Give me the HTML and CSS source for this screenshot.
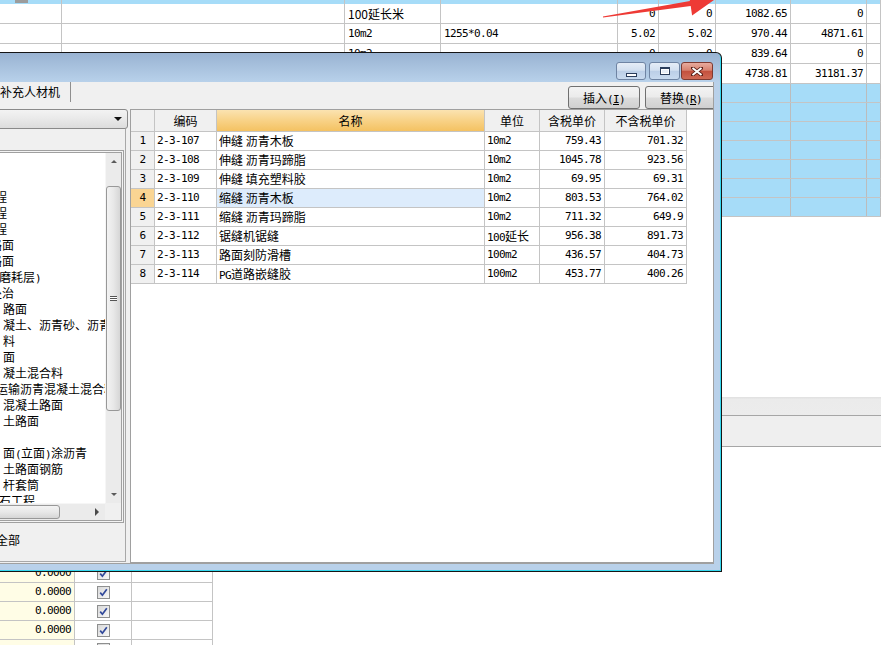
FILE: index.html
```html
<!DOCTYPE html>
<html lang="zh">
<head>
<meta charset="utf-8">
<title>补充人材机</title>
<link rel="stylesheet" href="styles.css">
</head>
<body>
<div class="sheet">
  <div class="row band">
    <div><span class="handle"></span></div><div></div><div></div><div></div><div></div><div></div><div></div><div></div><div></div>
  </div>
  <div class="row">
    <div></div><div></div><div>100延长米</div><div></div><div class="r n">0</div><div class="r n">0</div><div class="r n">1082.65</div><div class="r n">0</div><div></div>
  </div>
  <div class="row">
    <div></div><div></div><div class="n">10m2</div><div class="n">1255*0.04</div><div class="r n">5.02</div><div class="r n">5.02</div><div class="r n">970.44</div><div class="r n">4871.61</div><div></div>
  </div>
  <div class="row">
    <div></div><div></div><div class="n">10m2</div><div></div><div class="r n">0</div><div class="r n">0</div><div class="r n">839.64</div><div class="r n">0</div><div></div>
  </div>
  <div class="row">
    <div></div><div></div><div></div><div></div><div></div><div></div><div class="r n">4738.81</div><div class="r n">31181.37</div><div></div>
  </div>
  <div class="row blue"><div></div><div></div><div></div><div></div><div></div><div></div><div></div><div></div><div></div></div>
  <div class="row blue"><div></div><div></div><div></div><div></div><div></div><div></div><div></div><div></div><div></div></div>
  <div class="row blue"><div></div><div></div><div></div><div></div><div></div><div></div><div></div><div></div><div></div></div>
  <div class="row blue"><div></div><div></div><div></div><div></div><div></div><div></div><div></div><div></div><div></div></div>
  <div class="row blue"><div></div><div></div><div></div><div></div><div></div><div></div><div></div><div></div><div></div></div>
  <div class="row blue"><div></div><div></div><div></div><div></div><div></div><div></div><div></div><div></div><div></div></div>
  <div class="row blue"><div></div><div></div><div></div><div></div><div></div><div></div><div></div><div></div><div></div></div>

  <div class="bar1"></div>
  <div class="bar2"></div>

  <div class="lower">
    <div class="lrow"><div class="ly n">0.0000</div><div class="lc"><span class="cb"><svg width="11" height="11" viewBox="0 0 11 11"><path d="M2.2 5.6 L4.4 8.2 L8.8 2.2" fill="none" stroke="#30489a" stroke-width="1.7"/></svg></span></div><div></div></div>
    <div class="lrow"><div class="ly n">0.0000</div><div class="lc"><span class="cb"><svg width="11" height="11" viewBox="0 0 11 11"><path d="M2.2 5.6 L4.4 8.2 L8.8 2.2" fill="none" stroke="#30489a" stroke-width="1.7"/></svg></span></div><div></div></div>
    <div class="lrow"><div class="ly n">0.0000</div><div class="lc"><span class="cb"><svg width="11" height="11" viewBox="0 0 11 11"><path d="M2.2 5.6 L4.4 8.2 L8.8 2.2" fill="none" stroke="#30489a" stroke-width="1.7"/></svg></span></div><div></div></div>
    <div class="lrow"><div class="ly n">0.0000</div><div class="lc"><span class="cb"><svg width="11" height="11" viewBox="0 0 11 11"><path d="M2.2 5.6 L4.4 8.2 L8.8 2.2" fill="none" stroke="#30489a" stroke-width="1.7"/></svg></span></div><div></div></div>
    <div class="lrow"><div class="ly"></div><div class="lc"><span class="cb"><svg width="11" height="11" viewBox="0 0 11 11"><path d="M2.2 5.6 L4.4 8.2 L8.8 2.2" fill="none" stroke="#30489a" stroke-width="1.7"/></svg></span></div><div></div></div>
  </div>
</div>

<svg class="arrow" width="881" height="30" viewBox="0 0 881 30">
  <polygon points="602.9,16.5 689.9,1.1 688.5,-8.3 714,0 692.1,15.5 690.7,6.1 603.1,17.6" fill="#ee3a35"/>
</svg>

<div class="dialog">
  <div class="titlebar">
    <div class="tbtn tmin"><span class="imin"></span></div>
    <div class="tbtn tmax"><span class="imax"></span></div>
    <div class="tbtn tclose"><svg width="12" height="9" viewBox="0 0 12 9"><path d="M1.5 1 L10.5 8 M10.5 1 L1.5 8" stroke="#5a2018" stroke-width="3.6" stroke-linecap="square"/><path d="M1.5 1 L10.5 8 M10.5 1 L1.5 8" stroke="#ffffff" stroke-width="2"/></svg></div>
  </div>
  <div class="client">
    <div class="toolbar">
      <div class="tab">补充人材机</div>
      <div class="btns">
        <div class="btn">插入<span class="n">(<u>I</u>)</span></div>
        <div class="btn">替换<span class="n">(<u>R</u>)</span></div>
      </div>
    </div>
    <div class="body">
      <div class="leftcol">
        <div class="combo"><span class="carrow"></span></div>
        <div class="group">
          <div class="tree">
            <div class="tree-in">
              <div class="list">
                <div class="li o5">程</div>
                <div class="li o5">程</div>
                <div class="li o5">程</div>
                <div class="li o10">路面</div>
                <div class="li o10">路面</div>
                <div class="li o1">磨耗层<span class="n">)</span></div>
                <div class="li o10">处治</div>
                <div class="li">路面</div>
                <div class="li">凝土、沥青砂、沥青</div>
                <div class="li">料</div>
                <div class="li">面</div>
                <div class="li">凝土混合料</div>
                <div class="li o4">运输沥青混凝土混合料</div>
                <div class="li">混凝土路面</div>
                <div class="li">土路面</div>
                <div class="li"></div>
                <div class="li">面<span class="n">(</span>立面<span class="n">)</span>涂沥青</div>
                <div class="li">土路面钢筋</div>
                <div class="li">杆套筒</div>
                <div class="li o1">石工程</div>
              </div>
              <div class="vscroll">
                <div class="sarrow"><span class="tri-up"></span></div>
                <div class="sgap"></div>
                <div class="vthumb"><span class="grip"></span></div>
                <div class="sfill"></div>
                <div class="sarrow"><span class="tri-down"></span></div>
              </div>
              <div class="hscroll">
                <div class="hthumb"></div>
                <div class="hfill"></div>
                <div class="harrow"><span class="tri-right"></span></div>
              </div>
              <div class="corner"></div>
            </div>
          </div>
          <div class="all">全部</div>
        </div>
      </div>
      <div class="panel">
        <div class="grid">
          <div class="h rn"></div><div class="h c">编码</div><div class="h c hl">名称</div><div class="h c">单位</div><div class="h c">含税单价</div><div class="h c">不含税单价</div>

          <div class="rn n">1</div><div class="n">2-3-107</div><div>伸缝 沥青木板</div><div class="n">10m2</div><div class="r n">759.43</div><div class="r n">701.32</div>
          <div class="rn n">2</div><div class="n">2-3-108</div><div>伸缝 沥青玛蹄脂</div><div class="n">10m2</div><div class="r n">1045.78</div><div class="r n">923.56</div>
          <div class="rn n">3</div><div class="n">2-3-109</div><div>伸缝 填充塑料胶</div><div class="n">10m2</div><div class="r n">69.95</div><div class="r n">69.31</div>
          <div class="rn n cur">4</div><div class="n">2-3-110</div><div class="sel">缩缝 沥青木板</div><div class="n">10m2</div><div class="r n">803.53</div><div class="r n">764.02</div>
          <div class="rn n">5</div><div class="n">2-3-111</div><div>缩缝 沥青玛蹄脂</div><div class="n">10m2</div><div class="r n">711.32</div><div class="r n">649.9</div>
          <div class="rn n">6</div><div class="n">2-3-112</div><div>锯缝机锯缝</div><div><span class="n">100</span>延长</div><div class="r n">956.38</div><div class="r n">891.73</div>
          <div class="rn n">7</div><div class="n">2-3-113</div><div>路面刻防滑槽</div><div class="n">100m2</div><div class="r n">436.57</div><div class="r n">404.73</div>
          <div class="rn n">8</div><div class="n">2-3-114</div><div><span class="n">PG</span>道路嵌缝胶</div><div class="n">100m2</div><div class="r n">453.77</div><div class="r n">400.26</div>
        </div>
      </div>
    </div>
  </div>
</div>
</body>
</html>
```

FILE: styles.css
```css
* { box-sizing: border-box; }
html, body { margin: 0; padding: 0; }
body {
  width: 881px;
  height: 645px;
  overflow: hidden;
  position: relative;
  background: #ffffff;
  font-family: "Noto Sans CJK SC", "Liberation Sans", sans-serif;
  font-size: 12px;
  color: #000;
}
.n {
  font-family: "DejaVu Sans Mono", "Liberation Mono", monospace;
  font-size: 11px;
  letter-spacing: -0.62px;
}

/* background sheet */
.row {
  display: grid;
  grid-template-columns: 62px 283px 96px 177px 41px 57px 75px 76px 1fr;
  height: 20px;
  border-bottom: 1px solid #c4c4c4;
}
.row > div {
  border-right: 1px solid #c4c4c4;
  padding: 0 3px;
  line-height: 19px;
  white-space: nowrap;
  overflow: hidden;
}
.row > div.r, .grid > div.r { text-align: right; }
.row.band { height: 4px; border-bottom: none; background: #a6dcf8; }
.row.band > div { line-height: 4px; padding: 0; }
.handle { display: block; margin-left: 15px; width: 13px; height: 3px; background: #9c9c9c; }
.row.blue { height: 19px; background: #a6dcf8; }
.row.blue > div { border-color: #bcbcbc; }

.bar1 {
  margin-top: 180px;
  height: 19px;
  background: linear-gradient(#e2e2e2 0, #e2e2e2 1px, #ebebeb 2px, #ececec 100%);
  border-bottom: 1px solid #a6a6a6;
}
.bar2 {
  height: 31px;
  background: #efefef;
  border-bottom: 1px solid #a6a6a6;
}
.lower { margin-top: 117px; width: 213px; }
.lrow {
  display: grid;
  grid-template-columns: 75px 57px 81px;
  height: 19px;
  border-bottom: 1px solid #c4c4c4;
}
.lrow > div { border-right: 1px solid #c4c4c4; line-height: 18px; }
.ly { background: #fffde6; text-align: right; padding-right: 3px; }
.lc { display: flex; align-items: center; justify-content: center; }
.cb {
  display: flex;
  align-items: center;
  justify-content: center;
  width: 13px;
  height: 13px;
  border: 1px solid #8e8f8f;
  background: linear-gradient(135deg, #d9d9d9, #f7f7f7);
}

.arrow { position: absolute; left: 0; top: 0; pointer-events: none; }

/* dialog window */
.dialog {
  position: absolute;
  left: 0;
  top: 52px;
  width: 722px;
  height: 520px;
  border: 1px solid #151515;
  border-left: none;
  border-top-right-radius: 6px;
  padding: 0 7px 7px 0;
  background: linear-gradient(#99b3d2 0, #b8d1ea 29px, #b9d1ea 29px, #b9d1ea 100%);
  box-shadow: inset -1px -1px 0 #35d8ef;
  display: flex;
  flex-direction: column;
}
.titlebar {
  height: 29px;
  flex: none;
  display: flex;
  justify-content: flex-end;
  align-items: flex-start;
  padding: 9px 1px 0 0;
}
.tbtn {
  height: 18px;
  border: 1px solid #6f84a3;
  border-radius: 3px;
  display: flex;
  justify-content: center;
  align-items: center;
  position: relative;
}
.tmin { width: 30px; margin-right: 3px; background: linear-gradient(#e5edf7 0%, #d3e0f0 45%, #bccfe7 52%, #c8daef 100%); }
.tmax { width: 31px; margin-right: 1px; background: linear-gradient(#e5edf7 0%, #d3e0f0 45%, #bccfe7 52%, #c8daef 100%); }
.tclose { width: 32px; border-color: #7e3a31; background: linear-gradient(#e8ab9e 0%, #d78270 45%, #c4513e 52%, #cf6a55 100%); }
.imin {
  width: 11px;
  height: 4px;
  margin-top: 8px;
  border: 1px solid #2b3d5b;
  background: #fff;
}
.imax {
  width: 10px;
  height: 8px;
  margin-bottom: 1px;
  border: 1px solid #2b3d5b;
  border-top-width: 2px;
  background: #e8eef7;
  box-shadow: inset 0 0 0 1px #ffffff;
}

.client {
  flex: 1;
  background: #f0f0f0;
  border-right: 1px solid #a0a0a0;
  border-bottom: 1px solid #a0a0a0;
  overflow: hidden;
  display: flex;
  flex-direction: column;
}
.toolbar { height: 27px; flex: none; display: flex; align-items: flex-start; }
.tab {
  width: 71px;
  height: 20px;
  line-height: 20px;
  border-right: 1px solid #8f8f8f;
  white-space: nowrap;
}
.btns { margin-left: auto; margin-right: -4px; margin-top: 4px; display: flex; gap: 5px; }
.btn {
  width: 72px;
  height: 23px;
  border: 1px solid #707070;
  border-radius: 3px;
  background: linear-gradient(#f3f3f3 0%, #ebebeb 48%, #dcdcdc 52%, #d0d0d0 100%);
  text-align: center;
  line-height: 21px;
  white-space: nowrap;
}

.body { flex: 1; display: flex; }
.leftcol { width: 126px; flex: none; display: flex; flex-direction: column; }
.combo {
  height: 20px;
  width: 133px;
  margin-left: -5px;
  flex: none;
  border: 1px solid #8a8a8a;
  border-radius: 3px;
  background: linear-gradient(#f3f3f3 0%, #e9e9e9 50%, #dcdcdc 100%);
  display: flex;
  justify-content: flex-end;
  align-items: center;
  padding-right: 5px;
}
.carrow {
  width: 0;
  height: 0;
  border-left: 4px solid transparent;
  border-right: 4px solid transparent;
  border-top: 4px solid #111;
}
.group {
  height: 433px;
  border-right: 1px solid #a8a8a8;
  border-bottom: 1px solid #a8a8a8;
  padding-top: 21px;
}
.tree {
  margin-left: -3px;
  width: 127px;
  height: 373px;
  border: 1px solid #a0a0a0;
  padding: 1px;
  background: #f4f4f4;
}
.tree-in {
  height: 100%;
  border: 1px solid #a0a0a0;
  background: #fff;
  display: grid;
  grid-template-columns: 105px 16px;
  grid-template-rows: 350px 17px;
}
.list { overflow: hidden; padding-top: 36px; }
.li { height: 16px; line-height: 16px; white-space: nowrap; padding-left: 3px; }
.li.o5 { padding-left: 0; text-indent: -5px; }
.li.o10 { padding-left: 0; text-indent: -10px; }
.li.o1 { padding-left: 0; text-indent: -1px; }
.li.o4 { padding-left: 0; text-indent: -4px; }

.vscroll {
  background: #ebebeb;
  border-left: 1px solid #f6f6f6;
  display: flex;
  flex-direction: column;
  align-items: center;
}
.sarrow { height: 17px; width: 100%; display: flex; justify-content: center; align-items: center; }
.tri-up { width: 0; height: 0; border-left: 3px solid transparent; border-right: 3px solid transparent; border-bottom: 3px solid #5a5a5a; }
.tri-down { width: 0; height: 0; border-left: 3px solid transparent; border-right: 3px solid transparent; border-top: 3px solid #5a5a5a; }
.tri-right { width: 0; height: 0; border-top: 4px solid transparent; border-bottom: 4px solid transparent; border-left: 4px solid #4a4a4a; }
.sgap { height: 16px; }
.vthumb {
  height: 225px;
  width: 15px;
  border: 1px solid #989898;
  border-radius: 3px;
  background: linear-gradient(90deg, #f3f3f3 0%, #e8e8e8 50%, #d6d6d6 100%);
  display: flex;
  justify-content: center;
  align-items: center;
}
.grip {
  width: 7px;
  height: 5px;
  border-top: 1px solid #555;
  border-bottom: 1px solid #555;
  background: linear-gradient(#fff 0, #fff 1px, #555 1px, #555 2px, #fff 2px);
}
.sfill { flex: 1; }
.hscroll {
  background: #ebebeb;
  border-top: 1px solid #f6f6f6;
  display: flex;
  align-items: center;
}
.hthumb {
  width: 63px;
  height: 14px;
  margin-left: -3px;
  border: 1px solid #989898;
  border-radius: 3px;
  background: linear-gradient(#f3f3f3 0%, #e8e8e8 50%, #d6d6d6 100%);
}
.hfill { flex: 1; }
.harrow { width: 17px; display: flex; justify-content: center; }
.corner { background: #f0f0f0; }
.all { padding-top: 9px; line-height: 16px; text-indent: -4px; white-space: nowrap; }

.panel {
  width: 583px;
  margin-left: 4px;
  border: 1px solid #a0a0a0;
  border-right: none;
  background: #fff;
}
.grid {
  display: grid;
  grid-template-columns: 24px 62px 268px 55px 65px 82px;
  grid-template-rows: 22px;
  grid-auto-rows: 19px;
  width: 556px;
}
.grid > div {
  border-right: 1px solid #c4c4c4;
  border-bottom: 1px solid #c4c4c4;
  line-height: 18px;
  padding: 0 2px;
  white-space: nowrap;
  overflow: hidden;
}
.grid > div.r { padding-right: 3px; }
.grid > div.h { height: 22px; line-height: 21px; background: #f0f0f0; }
.grid > div.c { text-align: center; }
.grid > div.hl { background: linear-gradient(#fbe3b1 0%, #f8d287 50%, #f4c262 100%); }
.grid > div.rn { background: #f0f0f0; text-align: center; padding: 0; }
.grid > div.cur { background: #fad593; }
.grid > div.sel { background: #ddecfc; }
```
